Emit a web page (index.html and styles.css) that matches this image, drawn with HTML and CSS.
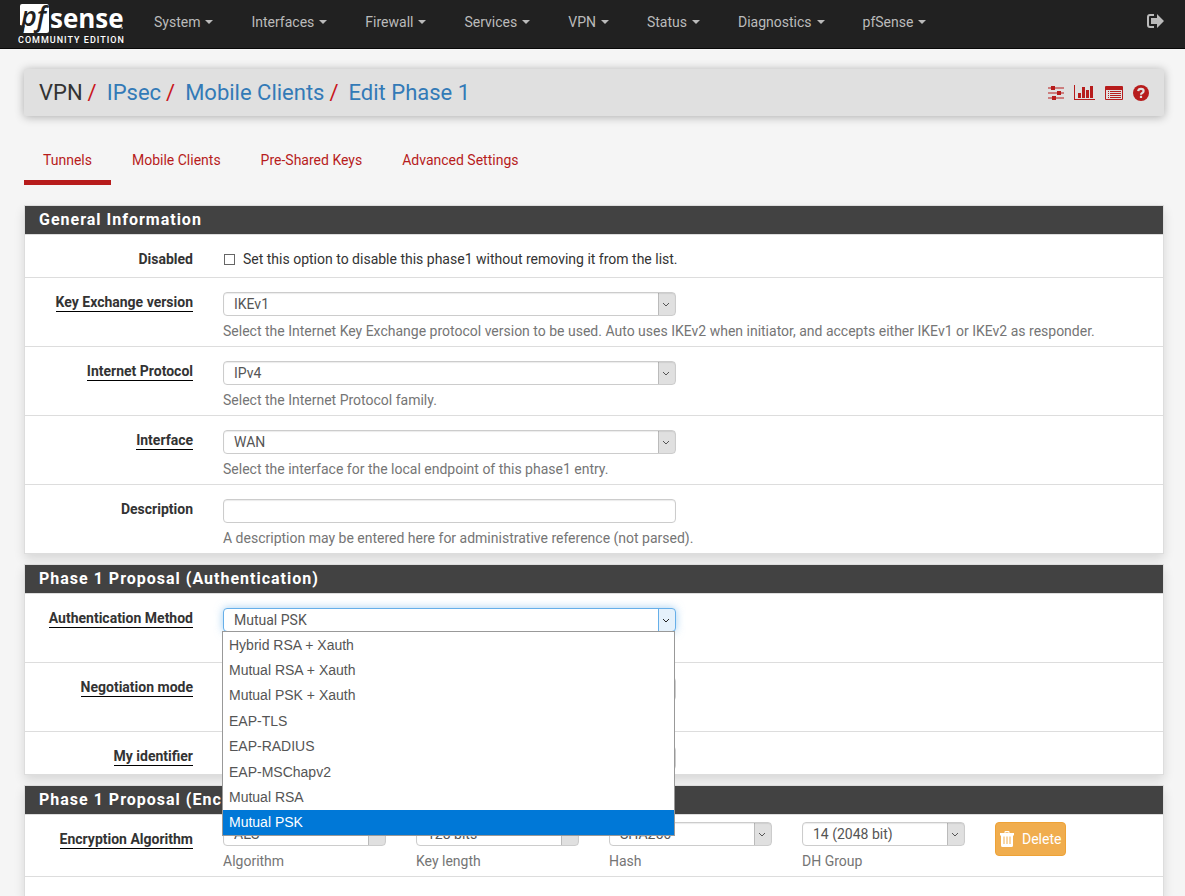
FILE: index.html
```html
<!DOCTYPE html>
<html lang="en">
<head>
    <meta charset="UTF-8">
    <meta name="viewport" content="width=device-width, initial-scale=1.0">
    <title>VPN: IPsec: Mobile Clients: Edit Phase 1</title>
    <link rel="stylesheet" href="styles.css">
</head>
<body>
    <header class="navbar">
        <a class="logo" href="#">
            <svg width="106" height="32" viewBox="0 0 106 32" role="img" aria-label="pfSense">
                <path d="M4 0H28.500Q31 0 31 2.500V26.500Q31 29 28.500 29H5L6.500 22 2 21V2Q2 0 4 0Z" fill="#fff"/>
                <text class="logo-pf" x="3" y="22">pf</text>
                <text class="logo-sense" x="32" y="24">sense</text>
                <circle cx="104" cy="24" r="1" fill="#999"/>
            </svg>
            <span class="edition">COMMUNITY EDITION</span>
        </a>
        <nav class="menu">
            <a href="#">System</a>
            <a href="#">Interfaces</a>
            <a href="#">Firewall</a>
            <a href="#">Services</a>
            <a href="#">VPN</a>
            <a href="#">Status</a>
            <a href="#">Diagnostics</a>
            <a href="#">pfSense</a>
        </nav>
        <a class="logout" href="#" aria-label="Logout">
            <svg width="17" height="14" viewBox="0 0 17 14">
                <path d="M7 1H3Q1 1 1 3V11Q1 13 3 13H7" fill="none" stroke="#bbb" stroke-width="2"/>
                <path d="M4 4H10V0L17 7 10 14V10H4Z" fill="#bbb"/>
            </svg>
        </a>
    </header>

    <main class="container">
        <div class="page-header">
            <h1 class="breadcrumb">
                <span>VPN</span><i>/</i><a href="#">IPsec</a><i>/</i><a href="#">Mobile Clients</a><i>/</i><a href="#">Edit Phase 1</a>
            </h1>
            <div class="shortcuts">
                <a href="#" aria-label="Settings">
                    <svg width="16" height="14" viewBox="0 0 16 14">
                        <path d="M0 1.500h16v1H0zM0 6.500h16v1H0zM0 11.500h16v1H0z"/>
                        <path d="M3 0h4v4H3zM9 5h4v4H9zM4 10h4v4H4z"/>
                    </svg>
                </a>
                <a href="#" aria-label="Status">
                    <svg width="21" height="15" viewBox="0 0 21 15">
                        <path d="M0 0h1v14h20v1H0zM4 8h3v5H4zM8 2h3v11H8zM12 5h3v8h-3zM16 1h3v12h-3z"/>
                    </svg>
                </a>
                <a href="#" aria-label="Logs">
                    <svg width="18" height="14" viewBox="0 0 18 14">
                        <path fill-rule="evenodd" d="M1 0h16q1 0 1 1v12q0 1-1 1H1q-1 0-1-1V1q0-1 1-1zM1 4v9h16V4z"/>
                        <path d="M3 5h1v1H3zM5 5h11v1H5zM3 7h1v1H3zM5 7h11v1H5zM3 9h1v1H3zM5 9h11v1H5zM3 11h1v1H3zM5 11h11v1H5z"/>
                    </svg>
                </a>
                <a href="#" aria-label="Help">
                    <svg width="16" height="16" viewBox="0 0 16 16">
                        <circle cx="8" cy="8" r="8"/>
                        <path d="M5.200 6.200Q5.400 3.800 8 3.800 10.600 3.800 10.600 6 10.600 7.200 9.200 7.900 8 8.500 8 9.700" fill="none" stroke="#e0e0e0" stroke-width="2.200"/>
                        <path d="M6.900 10.800h2.200v2.200H6.900z" fill="#e0e0e0"/>
                    </svg>
                </a>
            </div>
        </div>

        <nav class="tabs">
            <a class="active" href="#">Tunnels</a>
            <a href="#">Mobile Clients</a>
            <a href="#">Pre-Shared Keys</a>
            <a href="#">Advanced Settings</a>
        </nav>

        <form class="form">
            <section class="panel">
                <h2>General Information</h2>
                <div class="row">
                    <div class="grid">
                        <span class="label">Disabled</span>
                        <label class="check"><input type="checkbox" name="disabled"> Set this option to disable this phase1 without removing it from the list.</label>
                    </div>
                </div>
                <div class="row">
                    <div class="grid">
                        <label class="label required" for="iketype"><span>Key Exchange version</span></label>
                        <div class="field">
                            <select id="iketype"><option>IKEv1</option></select>
                        </div>
                        <p class="help">Select the Internet Key Exchange protocol version to be used. Auto uses IKEv2 when initiator, and accepts either IKEv1 or IKEv2 as responder.</p>
                    </div>
                </div>
                <div class="row">
                    <div class="grid">
                        <label class="label required" for="protocol"><span>Internet Protocol</span></label>
                        <div class="field">
                            <select id="protocol"><option>IPv4</option></select>
                        </div>
                        <p class="help">Select the Internet Protocol family.</p>
                    </div>
                </div>
                <div class="row">
                    <div class="grid">
                        <label class="label required" for="interface"><span>Interface</span></label>
                        <div class="field">
                            <select id="interface"><option>WAN</option></select>
                        </div>
                        <p class="help">Select the interface for the local endpoint of this phase1 entry.</p>
                    </div>
                </div>
                <div class="row">
                    <div class="grid">
                        <label class="label" for="descr">Description</label>
                        <div class="field">
                            <input type="text" id="descr">
                        </div>
                        <p class="help">A description may be entered here for administrative reference (not parsed).</p>
                    </div>
                </div>
            </section>

            <section class="panel">
                <h2>Phase 1 Proposal (Authentication)</h2>
                <div class="row tall">
                    <div class="grid">
                        <label class="label required" for="authmethod"><span>Authentication Method</span></label>
                        <div class="field">
                            <select id="authmethod" class="open"><option>Mutual PSK</option></select>
                            <ul class="options" role="listbox" aria-label="Authentication Method">
                                <li role="option">Hybrid RSA + Xauth</li>
                                <li role="option">Mutual RSA + Xauth</li>
                                <li role="option">Mutual PSK + Xauth</li>
                                <li role="option">EAP-TLS</li>
                                <li role="option">EAP-RADIUS</li>
                                <li role="option">EAP-MSChapv2</li>
                                <li role="option">Mutual RSA</li>
                                <li role="option" class="selected" aria-selected="true">Mutual PSK</li>
                            </ul>
                        </div>
                    </div>
                </div>
                <div class="row tall">
                    <div class="grid">
                        <label class="label required" for="mode"><span>Negotiation mode</span></label>
                        <div class="field">
                            <select id="mode"></select>
                        </div>
                    </div>
                </div>
                <div class="row">
                    <div class="grid">
                        <label class="label required" for="myid"><span>My identifier</span></label>
                        <div class="field">
                            <select id="myid"></select>
                        </div>
                    </div>
                </div>
            </section>

            <section class="panel last">
                <h2>Phase 1 Proposal (Encryption Algorithm)</h2>
                <div class="row">
                    <div class="grid">
                        <span class="label required"><span>Encryption Algorithm</span></span>
                        <div class="small">
                            <select id="algo"><option>AES</option></select>
                            <label for="algo">Algorithm</label>
                        </div>
                        <div class="small">
                            <select id="keylen"><option>128 bits</option></select>
                            <label for="keylen">Key length</label>
                        </div>
                        <div class="small">
                            <select id="hash"><option>SHA256</option></select>
                            <label for="hash">Hash</label>
                        </div>
                        <div class="small">
                            <select id="dhgroup"><option>14 (2048 bit)</option></select>
                            <label for="dhgroup">DH Group</label>
                        </div>
                        <div class="small">
                            <button class="delete" type="button">
                                <svg width="14" height="16" viewBox="0 0 14 16">
                                    <path fill-rule="evenodd" d="M0 2h4.500V1q0-1 1-1h3q1 0 1 1v1H14v2.500h-1V14.500q0 1.500-1.500 1.500h-9Q1 16 1 14.500V4.500H0zM5.500 1.200V2h3v-.8zM3.500 5.500V13h1V5.500zM6.500 5.500V13h1V5.500zM9.500 5.500V13h1V5.500z" fill="#fff"/>
                                </svg>
                                Delete
                            </button>
                        </div>
                    </div>
                </div>
            </section>
        </form>
    </main>
</body>
</html>
```

FILE: styles.css
```css
* {
    box-sizing: border-box;
}

body {
    margin: 0;
    min-height: 100vh;
    display: flex;
    flex-direction: column;
    background: #f5f5f5;
    color: #333;
    font: 14px/20px Roboto, "Liberation Sans", sans-serif;
}

a {
    text-decoration: none;
}

svg {
    display: block;
    overflow: visible;
}

/* top bar */
.navbar {
    display: flex;
    align-items: flex-start;
    height: 49px;
    padding: 0 21px 0 18px;
    background: #212121;
    border-bottom: 1px solid #080808;
}

.logo {
    width: 106px;
    padding-top: 4px;
    margin-right: 11px;
    color: #fff;
}

.logo-pf {
    font: italic 600 27px "Open Sans", sans-serif;
    fill: #212121;
}

.logo-sense {
    font: bold 26px "Open Sans", sans-serif;
    fill: #fff;
}

.edition {
    display: block;
    font-size: 9px;
    font-weight: 500;
    line-height: 8px;
    letter-spacing: 1px;
    white-space: nowrap;
}

.menu {
    display: flex;
}

.menu a {
    display: flex;
    align-items: center;
    padding: 12px 19px;
    color: #bbb;
}

.menu a::after {
    content: "";
    margin-left: 5px;
    border-top: 4px solid;
    border-left: 4px solid transparent;
    border-right: 4px solid transparent;
}

.logout {
    margin: 14px 0 0 auto;
}

.container {
    flex: 1;
    display: flex;
    flex-direction: column;
    padding: 20px 21px 0 24px;
}

/* page title */
.page-header {
    display: flex;
    justify-content: space-between;
    align-items: center;
    height: 47px;
    padding: 0 15px;
    background: #e0e0e0;
    border-radius: 2px;
    box-shadow: 0 1px 10px rgba(0, 0, 0, .3);
}

.breadcrumb {
    margin: 0;
    font-size: 22px;
    font-weight: 400;
    line-height: 24px;
}

.breadcrumb a {
    color: #337ab7;
}

.breadcrumb i {
    margin: 0 10px 0 5px;
    color: #c9161c;
    font-style: normal;
}

.shortcuts {
    display: flex;
    align-items: center;
    gap: 10px;
    fill: #b71c1c;
}

/* tabs */
.tabs {
    display: flex;
    gap: 2px;
    margin: 19px 0 20px;
}

.tabs a {
    padding: 15px 19px 10px;
    border-bottom: 5px solid transparent;
    color: #b71c1c;
}

.tabs .active {
    border-color: #b71c1c;
}

/* panels */
.form {
    flex: 1;
    display: flex;
    flex-direction: column;
    gap: 10px;
}

.panel {
    background: #fff;
    border: 1px solid #ddd;
    box-shadow: 0 5px 10px rgba(0, 0, 0, .12);
}

.panel.last {
    flex: 1;
    border-bottom: 0;
}

.panel h2 {
    margin: 0;
    padding: 0 14px;
    background: #424242;
    color: #fff;
    font-size: 16px;
    font-weight: 700;
    line-height: 28px;
    letter-spacing: 1px;
}

.row {
    border-top: 1px solid #ddd;
}

.panel.last .row {
    border-bottom: 1px solid #ddd;
}

.row.tall {
    min-height: 69px;
}

.grid {
    display: grid;
    grid-template-columns: repeat(12, 1fr);
    margin: 0 -10px;
}

.label {
    grid-column: span 2;
    padding: 14px 15px 8px;
    font-weight: 700;
    text-align: right;
}

.required span {
    display: inline-block;
    line-height: 17px;
    border-bottom: 1px solid #000;
}

.check {
    grid-column: span 10;
    display: flex;
    align-items: center;
    gap: 8px;
    padding: 14px 16px 8px;
}

.check input {
    appearance: none;
    width: 11px;
    height: 11px;
    margin: 0;
    background: #fff;
    border: 1px solid #666;
}

.field {
    position: relative;
    grid-column: span 5;
    padding: 14px 15px 0;
}

.help {
    grid-column: 3 / -1;
    margin: 1px 0 5px;
    padding: 0 15px;
    color: #757575;
}

.small {
    grid-column: span 2;
    padding: 7px 15px 5px;
    color: #757575;
}

.small label {
    display: block;
    margin-top: 5px;
}

select,
input[type="text"] {
    appearance: none;
    display: block;
    width: 100%;
    height: 24px;
    padding: 0 10px;
    background: #fff;
    border: 1px solid #ccc;
    border-radius: 4px;
    box-shadow: inset 0 1px 1px rgba(0, 0, 0, .08);
    color: #555;
    font: inherit;
}

select {
    background:
        url("data:image/svg+xml,%3Csvg xmlns='http://www.w3.org/2000/svg' width='8' height='5'%3E%3Cpath d='M1 1l3 3 3-3' fill='none' stroke='%23555'/%3E%3C/svg%3E") no-repeat right 5px center,
        linear-gradient(#e0e0e0, #e0e0e0) no-repeat right / 16px 100%,
        linear-gradient(#bbb, #bbb) no-repeat right / 17px 100%,
        #fff;
}

.open {
    background:
        url("data:image/svg+xml,%3Csvg xmlns='http://www.w3.org/2000/svg' width='8' height='5'%3E%3Cpath d='M1 1l3 3 3-3' fill='none' stroke='%23222'/%3E%3C/svg%3E") no-repeat right 5px center,
        linear-gradient(#e5f1fb, #e5f1fb) no-repeat right / 16px 100%,
        linear-gradient(#66afe9, #66afe9) no-repeat right / 17px 100%,
        #fff;
    border-color: #66afe9;
    box-shadow: 0 0 8px rgba(102, 175, 233, .6);
}

/* opened list, lies over the rows below */
.options {
    position: absolute;
    top: 37px;
    left: 14px;
    right: 16px;
    z-index: 10;
    display: grid;
    grid-auto-rows: 1fr;
    height: 205px;
    margin: 0;
    padding: 0;
    background: #fff;
    border: 1px solid #999;
    color: #555;
    font-family: "Liberation Sans", Arial, sans-serif;
    list-style: none;
}

.options li {
    display: flex;
    align-items: center;
    padding: 0 6px;
}

.options .selected {
    background: #0078d7;
    color: #fff;
}

.delete {
    display: flex;
    align-items: center;
    gap: 8px;
    height: 34px;
    padding: 0 4px;
    background: #f0ad4e;
    border: 1px solid #eea236;
    border-radius: 4px;
    color: #fff;
    font: inherit;
}
```
